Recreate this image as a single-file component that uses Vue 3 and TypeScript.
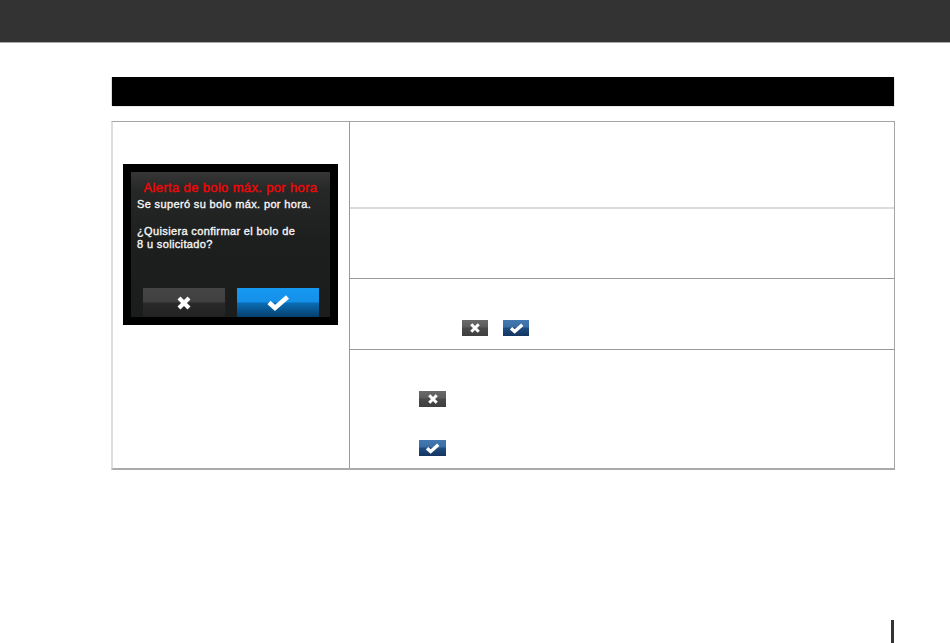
<script setup lang="ts">
const rows: { h: string; kind: string }[] = [
  { h: 'r1', kind: 'none' },
  { h: 'r2', kind: 'none' },
  { h: 'r3', kind: 'inline' },
  { h: 'r4', kind: 'stack' },
]
</script>

<template>
  <div class="page">
    <header class="top"></header>
    <div class="title"></div>
    <div class="table">
      <div class="left">
        <div class="device">
          <div class="screen">
            <div class="alert">Alerta de bolo máx. por hora</div>
            <p class="msg">Se superó su bolo máx. por hora.</p>
            <p class="msg gap">¿Quisiera confirmar el bolo de<br />8 u solicitado?</p>
            <div class="actions">
              <div class="big gray">
                <svg width="16" height="16" viewBox="0 0 16 16"><path d="M3 3l10 10M13 3L3 13" stroke="#fff" stroke-width="4.2" fill="none" /></svg>
              </div>
              <div class="big blue">
                <svg width="24" height="18" viewBox="0 0 24 18"><path d="M3 8.5l6 5.5L21.5 3" stroke="#fff" stroke-width="4.6" fill="none" /></svg>
              </div>
            </div>
          </div>
        </div>
      </div>
      <div class="right">
        <div v-for="r in rows" :key="r.h" class="row" :class="r.h">
          <div v-if="r.kind === 'inline'" class="inline">
            <span class="mini gray">
              <svg width="12" height="12" viewBox="0 0 16 16"><path d="M3 3l10 10M13 3L3 13" stroke="#fff" stroke-width="4" fill="none" /></svg>
            </span>
            <span class="mini blue">
              <svg width="15" height="11" viewBox="0 0 24 18"><path d="M3 8.5l6 5.5L21.5 3" stroke="#fff" stroke-width="5.5" fill="none" /></svg>
            </span>
          </div>
          <div v-else-if="r.kind === 'stack'" class="stack">
            <span class="mini gray">
              <svg width="12" height="12" viewBox="0 0 16 16"><path d="M3 3l10 10M13 3L3 13" stroke="#fff" stroke-width="4" fill="none" /></svg>
            </span>
            <span class="mini blue">
              <svg width="15" height="11" viewBox="0 0 24 18"><path d="M3 8.5l6 5.5L21.5 3" stroke="#fff" stroke-width="5.5" fill="none" /></svg>
            </span>
          </div>
        </div>
      </div>
    </div>
    <div class="tick"></div>
  </div>
</template>

<style>
html, body { margin: 0; background: #fff; overflow: hidden; }
</style>

<style scoped>
.page { width: 950px; height: 643px; display: flex; flex-direction: column; font-family: "Liberation Sans", Arial, sans-serif; overflow: hidden; }
.top { height: 42px; background: #333; border-bottom: 1px solid #a8a8a8; flex: none; }
.title { height: 29px; margin: 34px 56px 0 112px; background: #000; box-shadow: -1px 0 0 #ddd, 1px 1px 0 #e8e8e8; flex: none; }
.table { margin: 15px 55px 0 111px; height: 349px; box-sizing: border-box; display: flex; border: 1px solid #a5a5a5; border-left: 2px solid #ddd; border-bottom: 2px solid #aaa; flex: none; }
.left { width: 237px; box-sizing: border-box; border-right: 1px solid #999; flex: none; padding: 42px 0 0 10px; }
.device { width: 199px; height: 145px; background: #000; padding: 8px; }
.screen { height: 145px; background: linear-gradient(#363636 0, #262727 18px, #1d1f1f 70px, #1b1d1c 100%); display: flex; flex-direction: column; color: #f6f6f6; font-size: 11px; letter-spacing: 0.36px; line-height: 13px; -webkit-text-stroke: 0.35px currentColor; }
.alert { color: #f00808; font-size: 13px; letter-spacing: 0.35px; text-align: center; margin-top: 9px; line-height: 14px; -webkit-text-stroke: 0.4px currentColor; }
.msg { margin: 3px 0 0 6px; }
.gap { margin-top: 14px; }
.actions { margin-top: auto; display: flex; justify-content: space-between; padding: 0 11px 0 12px; }
.big { width: 82px; height: 29px; display: flex; align-items: center; justify-content: center; }
.big.gray { background: linear-gradient(#454545 0, #404040 14px, #2a2a2a 15px, #222 100%); }
.big.blue { background: linear-gradient(#1699f2 0, #1590e8 14px, #0b6db5 15px, #053f6e 100%); }
.right { flex: 1; display: flex; flex-direction: column; }
.row { box-sizing: border-box; border-bottom: 1px solid #b5b5b5; position: relative; }
.r1 { height: 87px; border-bottom: 2px solid #dcdcdc; }
.r2 { height: 70px; border-bottom-color: #999; }
.r3 { height: 71px; border-bottom-color: #999; }
.r4 { flex: 1; border-bottom: none; }
.inline { display: flex; gap: 15px; padding: 41px 0 0 112px; }
.stack { display: flex; flex-direction: column; gap: 33px; align-items: flex-start; padding: 41px 0 0 69px; }
.mini { width: 26px; height: 16px; display: flex; align-items: center; justify-content: center; }
.stack .mini { width: 27px; }
.mini.gray { background: linear-gradient(#6a6a6a 0, #5c5c5c 7px, #4a4a4a 8px, #3e3e3e 100%); }
.mini.blue { background: linear-gradient(#4379b0 0, #3b6ea5 7px, #1e4c82 8px, #15355f 100%); }
.tick { width: 3px; height: 23px; background: #333; margin: 150px 0 0 891px; flex: none; }
</style>
